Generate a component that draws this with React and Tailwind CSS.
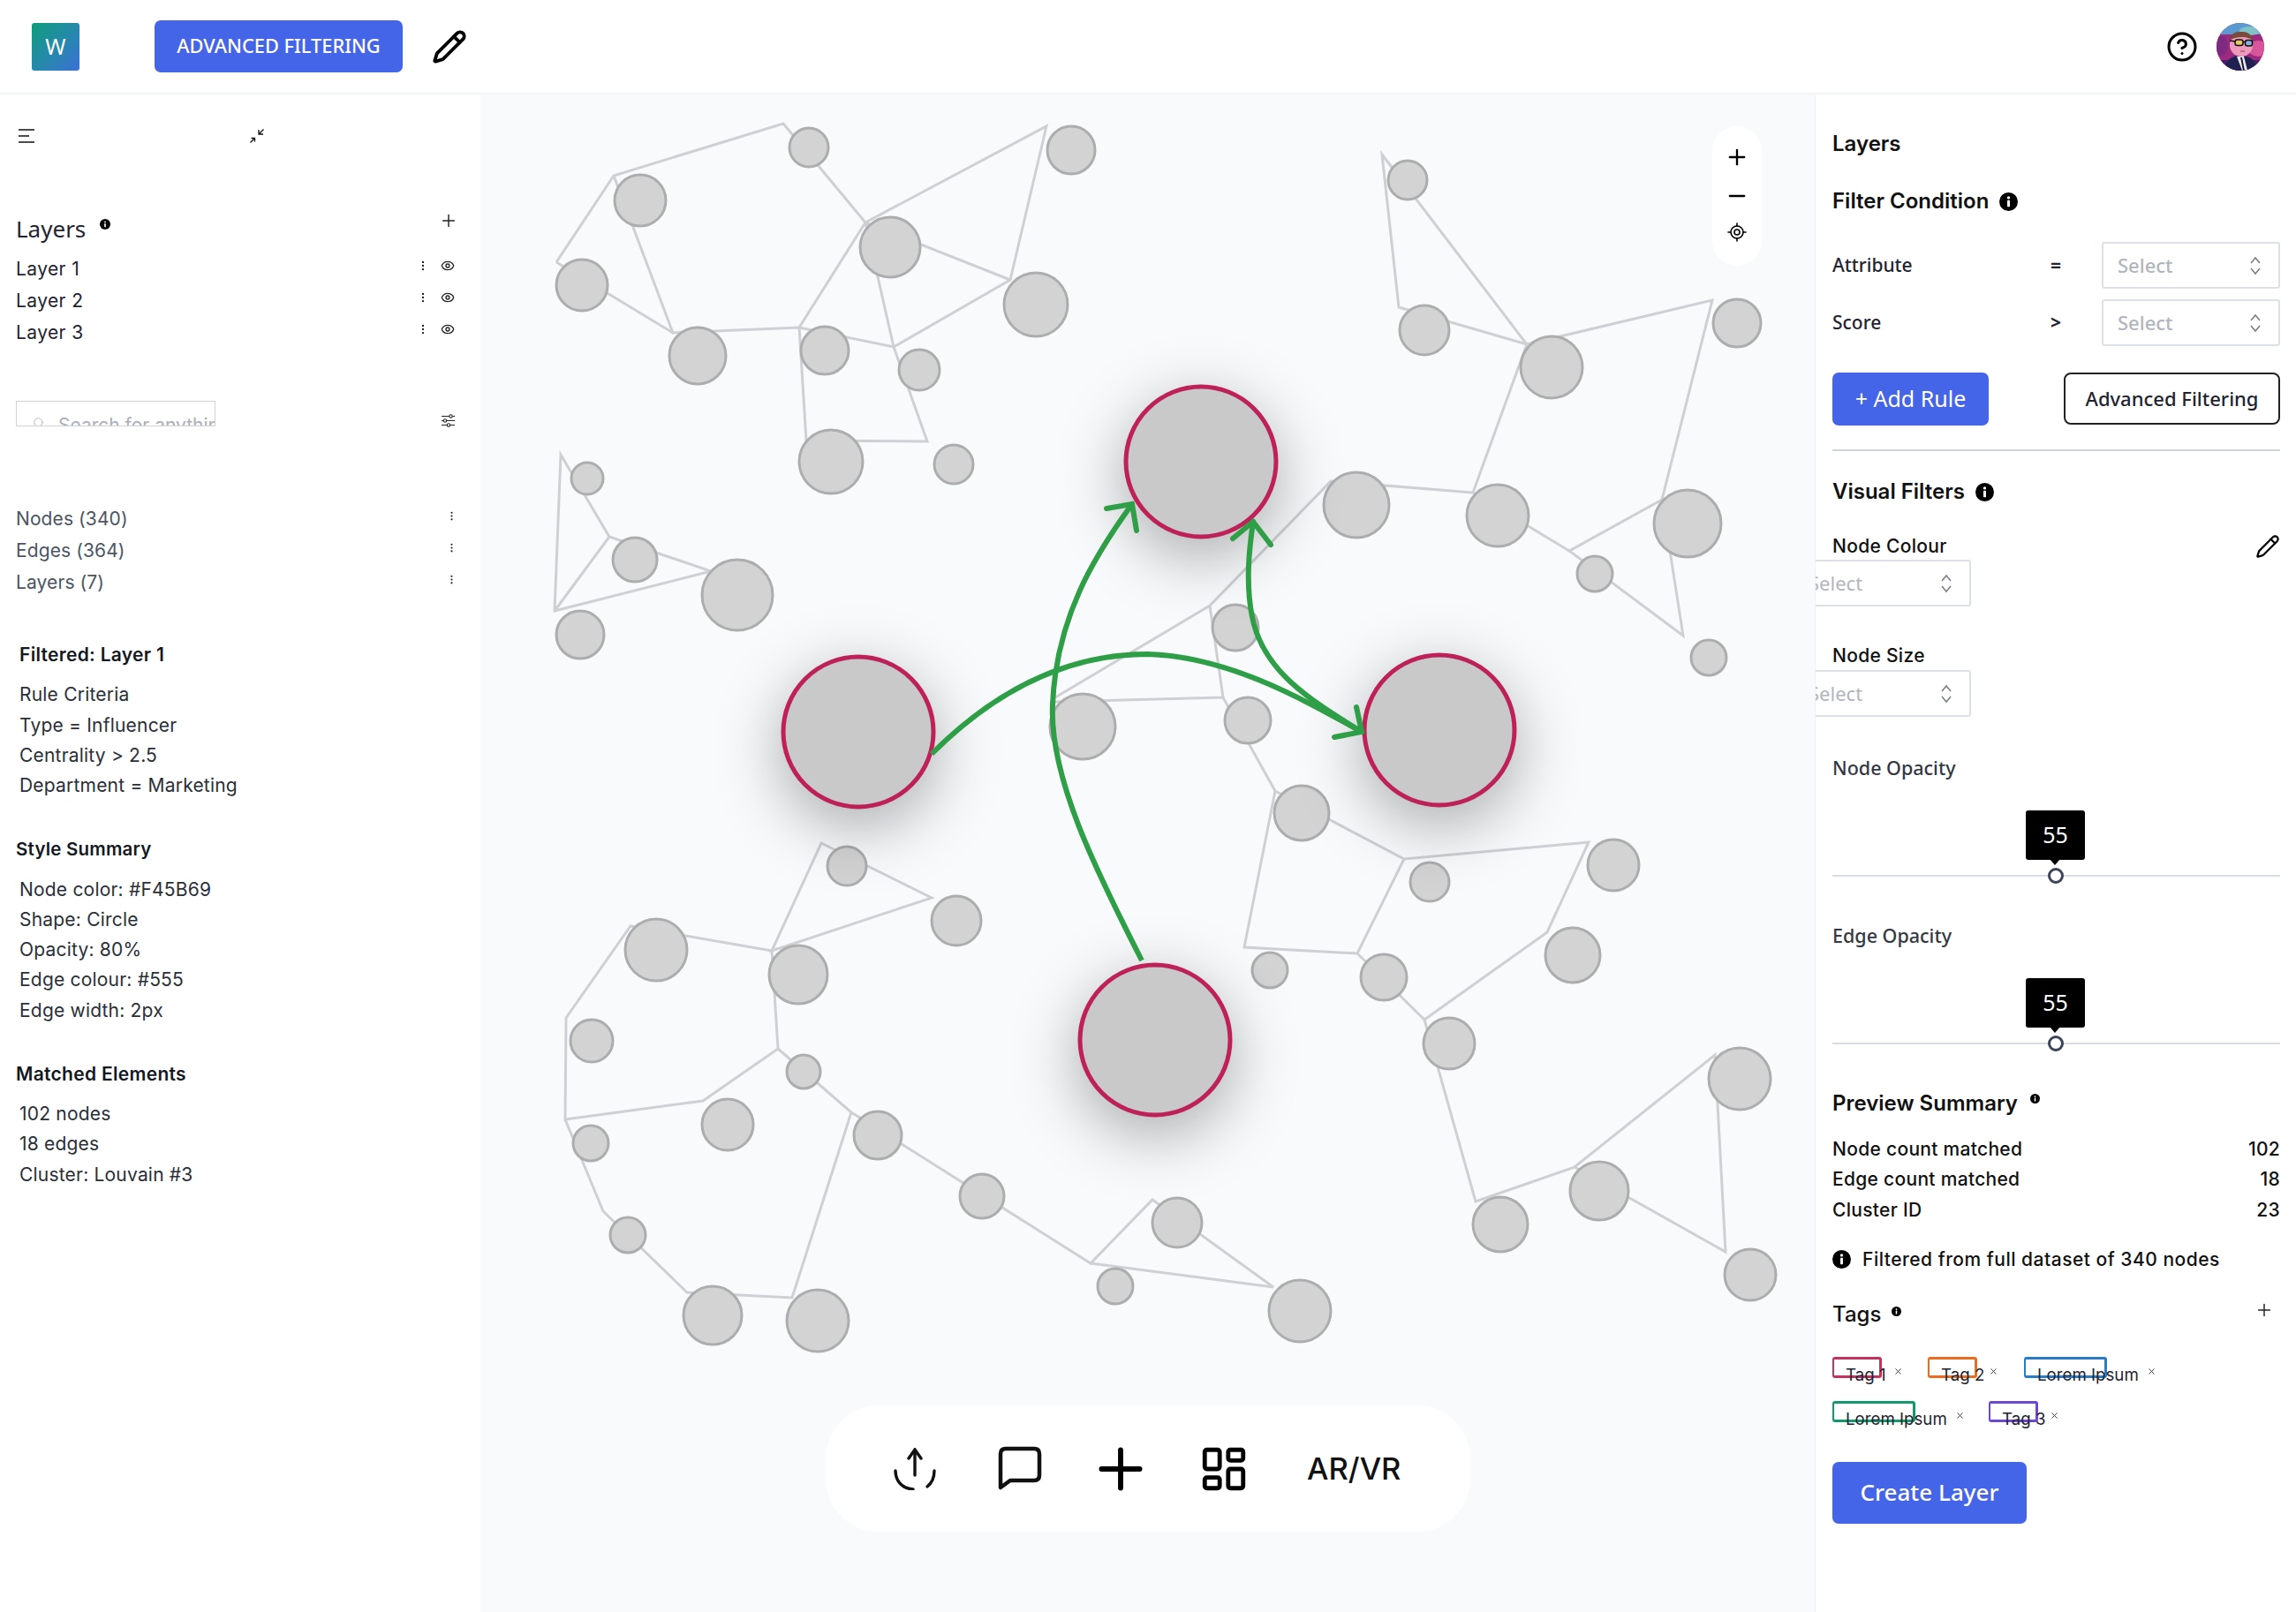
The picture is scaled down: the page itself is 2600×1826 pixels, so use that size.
import React from "react";
import { CircleHelp, EllipsisVertical, Eye, LayoutDashboard, LocateFixed, Minus, Pencil, Plus, Search, X } from "lucide-react";

const edges = [
  "M630 298 L695 200 L887 141 L980 253 L1185 144 L1144 318 L1012 394 L905 372 L762 378 L695 200",
  "M630 298 L762 378 M980 253 L1144 318 M980 253 L1012 394",
  "M980 253 L905 372 L913 500 L1050 501 L1012 394",
  "M635 516 L690 609 L805 648 L628 693 Z M690 609 L628 693",
  "M1565 176 L1584 349 L1729 391 Z",
  "M1729 391 L1939 341 L1882 567 L1777 625 L1668 559 Z",
  "M1668 559 L1507 546 L1370 687 L1195 791 M1370 687 L1385 791 L1195 796",
  "M1777 625 L1906 721 L1882 567 M1385 791 L1444 897",
  "M1444 897 L1590 974 L1799 955 L1752 1057 L1613 1156 L1537 1081 L1590 974",
  "M1537 1081 L1409 1074 L1444 897",
  "M1613 1156 L1671 1362 L1783 1323 L1942 1196 L1954 1419 L1783 1323",
  "M930 956 L1055 1018 L874 1078 Z",
  "M874 1078 L714 1050 L641 1154 L640 1269 L796 1248 L881 1189 L874 1078",
  "M881 1189 L964 1261 L897 1471 L778 1465 L683 1373 L640 1269",
  "M964 1261 L1235 1432 L1305 1360 L1442 1459 L1235 1432",
];

const nodes = [
  [725, 228, 29], [916, 168, 22], [1213, 171, 27], [1008, 281, 34], [1173, 346, 36], [659, 324, 29],
  [790, 404, 32], [934, 398, 27], [1041, 420, 23], [941, 524, 36], [1080, 527, 22], [665, 543, 18],
  [719, 635, 25], [835, 675, 40], [657, 720, 27],
  [1594, 205, 22], [1613, 375, 28], [1967, 367, 27], [1757, 417, 35], [1536, 573, 37], [1696, 585, 35],
  [1911, 594, 38], [1806, 651, 20], [1935, 746, 20], [1399, 712, 26], [1413, 817, 26], [1226, 824, 37],
  [1474, 922, 31], [1619, 1000, 22], [1827, 981, 29], [1781, 1083, 31], [1567, 1108, 26], [1438, 1100, 20],
  [1641, 1183, 29], [1970, 1223, 35], [1811, 1350, 33], [1699, 1388, 31], [1982, 1445, 29], [1333, 1386, 28],
  [1472, 1486, 35],
  [959, 982, 22], [1083, 1044, 28], [743, 1077, 35], [904, 1105, 33], [670, 1180, 24], [910, 1215, 19],
  [824, 1275, 29], [994, 1287, 27], [669, 1296, 20], [1112, 1356, 25], [711, 1400, 20], [807, 1491, 33],
  [926, 1497, 35], [1263, 1458, 20],
];

const hubs = [[1360, 524], [972, 830], [1630, 828], [1308, 1179]];

function Info({ className }) {
  return (
    <svg viewBox="0 0 20 20" className={className}>
      <circle cx="10" cy="10" r="10" fill="#000" />
      <circle cx="10" cy="5.6" r="1.6" fill="#fff" />
      <rect x="8.6" y="8.4" width="2.8" height="7" rx="0.6" fill="#fff" />
    </svg>
  );
}

function Avatar() {
  return (
    <svg viewBox="0 0 54 54" className="w-[54px] h-[54px] rounded-full">
      <rect width="54" height="54" fill="#9c2a7e" />
      <rect width="54" height="13" fill="#5a9ad0" />
      <ellipse cx="38" cy="9" rx="12" ry="5" fill="#7fc2c9" />
      <ellipse cx="47" cy="29" rx="11" ry="9" fill="#d8559c" />
      <ellipse cx="5" cy="26" rx="8" ry="11" fill="#7d2a80" />
      <rect y="42" width="54" height="12" fill="#4a1f6a" />
      <path d="M9 54 C10 42 17 37 27 37 C38 37 45 42 46 54 Z" fill="#1f2150" />
      <path d="M23 38 L29 54 L35 54 L31 38 Z" fill="#eceaf2" />
      <path d="M27 39 L30 54 L32 54 L29 39 Z" fill="#15152a" />
      <circle cx="28" cy="25" r="13" fill="#ee9bbb" />
      <path d="M16 19 C15 12 22 10 28 10 C35 10 40 13 41 19 C33 15 23 15 16 19 Z" fill="#7a4a3a" />
      <rect x="21" y="19" width="9" height="6.5" rx="2.5" fill="#e8c46a" stroke="#111" strokeWidth="1.5" />
      <rect x="32.5" y="19.5" width="8" height="6.5" rx="2.5" fill="#7fb6dc" stroke="#111" strokeWidth="1.5" />
      <path d="M15 20 L21 21 M30 21.5 L32.5 21.5" stroke="#111" strokeWidth="1.4" />
      <path d="M27 32 H32" stroke="#8a3a58" strokeWidth="1" />
    </svg>
  );
}

function Select({ className }) {
  return (
    <div className={"h-[53px] w-[202px] shrink-0 flex items-center justify-between pl-[16px] pr-[20px] border-2 border-[#dde0e6] rounded-[3px] bg-white " + className}>
      <span className="font-['Noto_Sans',sans-serif] text-[22px] text-[#b1b5bd]">Select</span>
      <svg viewBox="0 0 12 22" className="w-[12px] h-[22px]" fill="none" stroke="#777b84" strokeWidth="1.5">
        <path d="M1 8 L6 2 L11 8 M1 14 L6 20 L11 14" />
      </svg>
    </div>
  );
}

function OpacitySlider({ className }) {
  return (
    <div className={className}>
      <div className="relative ml-[219px] w-[67px] h-[56px] bg-black rounded-[3px] flex items-center justify-center text-white text-[25px] font-['Noto_Sans',sans-serif]">
        55
        <span className="absolute left-[27px] -bottom-[6px] w-0 h-0 border-x-[6px] border-x-transparent border-t-[7px] border-t-black"></span>
      </div>
      <div className="relative mt-[17px] h-[2px] bg-[#d9dde3]">
        <span className="absolute left-[244px] -top-[8px] w-[18px] h-[18px] rounded-full bg-white border-[3px] border-[#3d4358]"></span>
      </div>
    </div>
  );
}

function Tag({ label, color, width, gap, xGap }) {
  return (
    <div className="flex items-start" style={{ marginRight: gap }}>
      <div className={"h-[24px] border-[3px] border-l-[2px] rounded-[3px] pl-[13px] pt-[6px] text-[18.7px] leading-[24px] text-[#1f2430] whitespace-nowrap " + color} style={{ width }}>
        {label}
      </div>
      <X className="mt-[11px] w-[11px] h-[11px] text-[#333]" strokeWidth={2} style={{ marginLeft: xGap }} />
    </div>
  );
}

export default function App() {
  return (
    <div className="w-[2600px] h-[1826px] flex flex-col bg-white font-['Inter',sans-serif] text-[#1f2430] overflow-hidden">
      {/* Top bar */}
      <header className="h-[107px] shrink-0 flex items-center border-b-2 border-[#f1f3f5] pl-[36px] pr-[36px]">
        <div className="w-[54px] h-[54px] rounded-[3px] bg-gradient-to-br from-[#0f9d78] to-[#3a6fd6] flex items-center justify-center text-white text-[25px] font-['Noto_Sans',sans-serif]">W</div>
        <button className="ml-[85px] w-[281px] h-[59px] rounded-[7px] bg-[#4565e8] text-white text-[21.8px] font-['Noto_Sans',sans-serif] font-medium">ADVANCED FILTERING</button>
        <Pencil className="ml-[33px] w-[40px] h-[40px] text-black" strokeWidth={2.3} />
        <CircleHelp className="ml-auto w-[36px] h-[36px] text-black" strokeWidth={2} />
        <div className="ml-[21px] w-[54px] h-[54px]"><Avatar /></div>
      </header>

      <div className="flex flex-1 min-h-0">
        {/* Left sidebar */}
        <aside className="w-[544px] shrink-0 pl-[19px] pr-[29px] pt-[39px] bg-white">
          <div className="w-[280px] h-[16px] flex items-center justify-between pl-[2px]">
            <svg viewBox="0 0 18 16" className="w-[18px] h-[16px]" stroke="#111" strokeWidth="1.6">
              <path d="M0 1 H18 M0 8 H12 M0 15 H18" />
            </svg>
            <svg viewBox="0 0 16 16" className="w-[16px] h-[16px]" fill="none" stroke="#111" strokeWidth="1.3">
              <path d="M15.5 0.5 L10 6 M10 1 V6 H15 M0.5 15.5 L5.5 10.5 M1.5 10.5 H5.5 V14.5" />
            </svg>
          </div>

          <div className="mt-[82px] h-[30px] flex items-center justify-between">
            <div className="flex items-start">
              <span className="text-[26px] font-['Noto_Sans',sans-serif] leading-[30px] -ml-[1px]">Layers</span>
              <Info className="ml-[16px] mt-[4px] w-[12px] h-[12px]" />
            </div>
            <Plus className="-mt-[18px] -mr-[4px] w-[22px] h-[22px] text-[#222]" strokeWidth={1.6} />
          </div>

          <div className="mt-[13px]">
            {["Layer 1", "Layer 2", "Layer 3"].map((l) => (
              <div key={l} className="h-[36px] flex items-center justify-between text-[21px] tracking-[0.4px]">
                <span className="-ml-[1px]">{l}</span>
                <span className="flex items-center -mt-[9px] text-[#222]">
                  <EllipsisVertical className="w-[14px] h-[14px]" strokeWidth={2} />
                  <Eye className="ml-[13px] w-[16px] h-[16px]" strokeWidth={2} />
                </span>
              </div>
            ))}
          </div>

          <div className="mt-[59px] flex items-start justify-between">
            <div className="w-[226px] h-[29px] border border-[#cfd3d8] overflow-hidden flex items-start pl-[18px] pt-[17px] -ml-[1px] text-[#aab0b8]">
              <Search className="shrink-0 w-[14px] h-[14px]" strokeWidth={1.5} />
              <span className="ml-[15px] -mt-[3px] text-[21px] leading-[26px] whitespace-nowrap">Search for anything</span>
            </div>
            <svg viewBox="0 0 15 15" className="mt-[15px] w-[15px] h-[15px]" fill="#fff" stroke="#222" strokeWidth="1.1">
              <path d="M0 2.5 H15 M0 7.5 H15 M0 12.5 H15" />
              <circle cx="10.5" cy="2.5" r="1.7" />
              <circle cx="4" cy="7.5" r="1.7" />
              <circle cx="8" cy="12.5" r="1.7" />
            </svg>
          </div>

          <div className="mt-[86px] text-[#4b5563] tracking-[0.1px]">
            {["Nodes (340)", "Edges (364)", "Layers (7)"].map((l) => (
              <div key={l} className="h-[36px] flex items-center justify-between text-[21px]">
                <span className="-ml-[1px]">{l}</span>
                <EllipsisVertical className="-mr-[3px] -mt-[7px] w-[13px] h-[13px] text-[#222]" strokeWidth={2} />
              </div>
            ))}
          </div>

          <div className="mt-[47px] ml-[3px] h-[34px] flex items-center text-[21px] font-semibold text-[#14181f] tracking-[0.3px]">Filtered: Layer 1</div>
          <div className="mt-[11px] ml-[3px] text-[21px] text-[#2a2f38] tracking-[0.2px]">
            {["Rule Criteria", "Type = Influencer", "Centrality > 2.5", "Department = Marketing"].map((l) => (
              <div key={l} className="h-[34.3px] flex items-center">{l}</div>
            ))}
          </div>

          <div className="mt-[38px] -ml-[1px] h-[34px] flex items-center text-[20.5px] font-semibold text-[#14181f] tracking-[0.2px]">Style Summary</div>
          <div className="mt-[11px] ml-[3px] text-[21px] text-[#2a2f38] tracking-[0.2px]">
            {["Node color: #F45B69", "Shape: Circle", "Opacity: 80%", "Edge colour: #555", "Edge width: 2px"].map((l) => (
              <div key={l} className="h-[34.3px] flex items-center">{l}</div>
            ))}
          </div>

          <div className="mt-[38px] -ml-[1px] h-[34px] flex items-center text-[21px] font-semibold text-[#14181f] tracking-[0.3px]">Matched Elements</div>
          <div className="mt-[11px] ml-[3px] text-[21px] text-[#2a2f38] tracking-[0.2px]">
            {["102 nodes", "18 edges", "Cluster: Louvain #3"].map((l) => (
              <div key={l} className="h-[34.3px] flex items-center">{l}</div>
            ))}
          </div>
        </aside>

        {/* Graph canvas */}
        <main className="relative flex-1 bg-[#f8fafc]">
          <svg viewBox="544 109 1511 1717" className="w-full h-full">
            <g fill="none" stroke="#cfd0d3" strokeWidth="3">
              {edges.map((d) => <path key={d} d={d} />)}
            </g>
            {nodes.map(([cx, cy, r]) => (
              <circle key={cx + "-" + cy} cx={cx} cy={cy} r={r} fill="#d3d3d3" stroke="#adadaf" strokeWidth="3" />
            ))}
            {hubs.map(([cx, cy]) => (
              <circle key={cx} cx={cx} cy={cy} r="85" fill="#c9c9c9" stroke="#bd2158" strokeWidth="5" className="drop-shadow-[0_20px_36px_rgba(0,0,0,0.32)]" />
            ))}
            <g fill="none" stroke="#2e9e47" strokeWidth="6" strokeLinecap="round">
              <path d="M1293 1089 C1240 985 1188 880 1192 799 C1196 700 1240 630 1282 572" strokeLinecap="butt" />
              <path d="M1253 577 L1282 572 L1287 602" />
              <path d="M1055 855 C1110 800 1190 742 1300 742 C1390 745 1470 790 1542 830" strokeLinecap="butt" />
              <path d="M1536 802 L1542 830 L1511 836" />
              <path d="M1542 830 C1480 792 1430 760 1418 700 C1410 660 1415 620 1419 592" />
              <path d="M1396 611 L1419 592 L1439 618" />
            </g>
          </svg>

          {/* Zoom controls */}
          <div className="absolute left-[1395px] top-[36px] w-[56px] h-[158px] rounded-full bg-white flex flex-col items-center pt-[21px] text-black">
            <Plus className="w-[28px] h-[28px]" strokeWidth={2} />
            <Minus className="mt-[16px] w-[28px] h-[28px]" strokeWidth={2} />
            <LocateFixed className="mt-[15px] w-[24px] h-[24px]" strokeWidth={1.6} />
          </div>

          {/* Bottom toolbar */}
          <div className="absolute left-[391px] top-[1485px] w-[730px] h-[143px] rounded-[60px] bg-white flex items-center pl-[77px] text-black">
            <svg viewBox="0 0 48 48" className="w-[48px] h-[48px] shrink-0" fill="none" stroke="#111" strokeWidth="3.4" strokeLinecap="round">
              <path d="M24 3 V31 M17 12 L24 2 L31 12" />
              <path d="M2 26 C2 36 8 46 22 47" />
              <path d="M46 26 C46 34 43 40 38 44" />
            </svg>
            <svg viewBox="0 0 50 51" className="ml-[70px] w-[50px] h-[51px] shrink-0" fill="none" stroke="#111" strokeWidth="4.5" strokeLinejoin="round">
              <path d="M3 47 V9 Q3 3 9 3 H41 Q47 3 47 9 V33 Q47 39 41 39 H14 Z" />
            </svg>
            <Plus className="ml-[52px] w-[74px] h-[74px] shrink-0" strokeWidth={1.9} />
            <LayoutDashboard className="ml-[51px] w-[58px] h-[58px] shrink-0" strokeWidth={2} />
            <span className="ml-[65px] text-[34.5px] font-medium font-['Inter',sans-serif] text-[#111]">AR/VR</span>
          </div>
        </main>

        {/* Right panel */}
        <aside className="w-[545px] shrink-0 border-l border-[#eef0f3] pl-[19px] pr-[18px] pt-[41px] bg-white overflow-hidden">
          <h2 className="h-[30px] flex items-center text-[24px] font-semibold text-[#111]">Layers</h2>
          <div className="mt-[35px] h-[30px] flex items-center text-[24px] font-semibold text-[#111]">
            Filter Condition
            <Info className="ml-[12px] w-[21px] h-[21px]" />
          </div>

          <div className="mt-[31px] h-[53px] flex items-center text-[21px] font-['Noto_Sans',sans-serif] font-medium">
            <span className="w-[247px]">Attribute</span>
            <span className="w-[58px] font-bold">=</span>
            <Select />
          </div>
          <div className="mt-[12px] h-[53px] flex items-center text-[21px] font-['Noto_Sans',sans-serif] font-medium">
            <span className="w-[247px]">Score</span>
            <span className="w-[58px] font-bold">&gt;</span>
            <Select />
          </div>

          <div className="mt-[30px] flex items-start justify-between">
            <button className="w-[177px] h-[60px] rounded-[7px] bg-[#4565e8] text-white text-[25px] font-['Noto_Sans',sans-serif]">+ Add Rule</button>
            <button className="w-[245px] h-[59px] rounded-[8px] border-2 border-[#222] pb-[2px] text-[22px] leading-[26px] font-['Noto_Sans',sans-serif] font-medium">Advanced Filtering</button>
          </div>
          <div className="mt-[27px] h-[2px] bg-[#d1d5db]"></div>

          <div className="mt-[31px] h-[30px] flex items-center text-[24px] font-semibold text-[#111]">
            Visual Filters
            <Info className="ml-[12px] w-[21px] h-[21px]" />
          </div>

          <div className="mt-[34px] h-[26px] flex items-center justify-between text-[21px] font-medium text-[#111] tracking-[0.3px]">
            Node Colour
            <Pencil className="w-[28px] h-[28px] text-black" strokeWidth={1.9} />
          </div>
          <Select className="mt-[2px] -ml-[45px]" />

          <div className="mt-[43px] h-[26px] flex items-center text-[21px] font-medium text-[#111] tracking-[0.3px]">Node Size</div>
          <Select className="mt-[3px] -ml-[45px]" />

          <div className="mt-[45px] h-[26px] flex items-center text-[21.5px] font-['Noto_Sans',sans-serif] font-medium text-[#333842]">Node Opacity</div>
          <OpacitySlider className="mt-[35px]" />

          <div className="mt-[54px] h-[26px] flex items-center text-[21.5px] font-['Noto_Sans',sans-serif] font-medium text-[#333842]">Edge Opacity</div>
          <OpacitySlider className="mt-[35px]" />

          <div className="mt-[52px] h-[30px] flex items-start text-[24px] leading-[30px] font-semibold text-[#111]">
            Preview Summary
            <Info className="ml-[14px] mt-[4px] w-[11px] h-[11px]" />
          </div>
          <div className="mt-[19px] text-[21px] font-medium text-[#111] tracking-[0.3px]">
            {[["Node count matched", "102"], ["Edge count matched", "18"], ["Cluster ID", "23"]].map(([k, v]) => (
              <div key={k} className="h-[34.5px] flex items-center justify-between">
                <span>{k}</span>
                <span>{v}</span>
              </div>
            ))}
          </div>
          <div className="mt-[27px] h-[24px] flex items-center text-[21px] font-medium text-[#111] tracking-[0.5px]">
            <Info className="w-[21px] h-[21px] mr-[13px]" />
            Filtered from full dataset of 340 nodes
          </div>

          <div className="mt-[35px] h-[30px] flex items-start justify-between">
            <div className="flex items-start text-[24px] leading-[30px] font-medium text-[#111]">
              Tags
              <Info className="ml-[12px] mt-[6px] w-[11px] h-[11px]" />
            </div>
            <Plus className="mr-[7px] -mt-[1px] w-[22px] h-[22px] text-[#222]" strokeWidth={1.6} />
          </div>

          <div className="mt-[33px] flex">
            <Tag label="Tag 1" color="border-[#c4325f]" width={56} xGap={13} gap={28} />
            <Tag label="Tag 2" color="border-[#ea6d1f]" width={56} xGap={13} gap={29} />
            <Tag label="Lorem Ipsum" color="border-[#2a7cc8]" width={94} xGap={44.5} />
          </div>
          <div className="mt-[26px] flex">
            <Tag label="Lorem Ipsum" color="border-[#14996f]" width={94} xGap={44.5} gap={27.5} />
            <Tag label="Tag 3" color="border-[#6b48d6]" width={56} xGap={13} />
          </div>

          <button className="mt-[45px] w-[220px] h-[70px] rounded-[7px] bg-[#4565e8] text-white text-[26px] font-['Noto_Sans',sans-serif] font-medium">Create Layer</button>
        </aside>
      </div>
    </div>
  );
}
